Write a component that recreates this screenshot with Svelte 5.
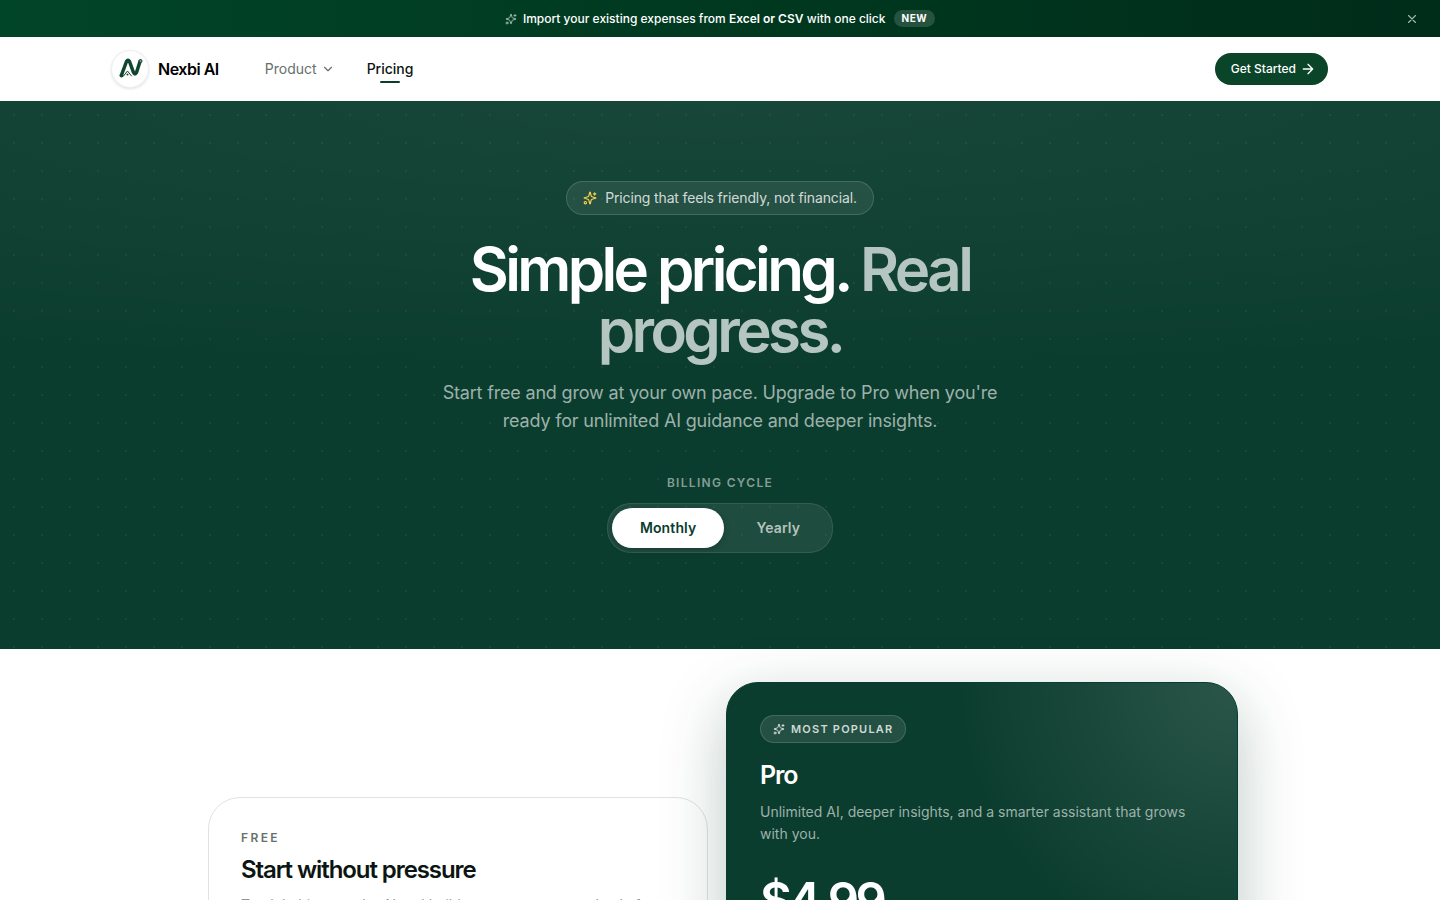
<script>
  const cycles = ["Monthly", "Yearly"];
  let cycle = $state("Monthly");
  let bannerOpen = $state(true);
</script>

{#snippet sparkles(size)}
  <svg class="icon" width={size} height={size} viewBox="0 0 24 24" aria-hidden="true">
    <path d="M9.937 15.5A2 2 0 0 0 8.5 14.063l-6.135-1.582a.5.5 0 0 1 0-.962L8.5 9.936A2 2 0 0 0 9.937 8.5l1.582-6.135a.5.5 0 0 1 .963 0L14.063 8.5A2 2 0 0 0 15.5 9.937l6.135 1.581a.5.5 0 0 1 0 .964L15.5 14.063a2 2 0 0 0-1.437 1.437l-1.582 6.135a.5.5 0 0 1-.963 0z" />
    <path d="M20 3v4M22 5h-4" />
    <circle cx="4" cy="20" r="2" />
  </svg>
{/snippet}

{#if bannerOpen}
  <div class="banner">
    {@render sparkles(12)}
    <span>Import your existing expenses from <b>Excel or CSV</b> with one click</span>
    <span class="new">NEW</span>
    <button class="close" aria-label="Dismiss" onclick={() => (bannerOpen = false)}>
      <svg class="icon" width="14" height="14" viewBox="0 0 24 24"><path d="M18 6 6 18M6 6l12 12" /></svg>
    </button>
  </div>
{/if}

<header>
  <div class="bar">
    <a class="brand" href="/">
      <span class="logo">
        <svg width="26" height="22" viewBox="0 0 26 22" aria-hidden="true">
          <path class="stroke" d="M4.500 17 9.500 3.500Q11 1 12.500 3.500L16.500 14.500Q18 17.500 19.500 14.500L23 3.500" />
          <path class="thin" d="M6.500 18 10.500 13 14.500 18" />
          <circle cx="10.500" cy="16.500" r="1" />
          <circle cx="4.500" cy="17.500" r="2" />
          <circle class="ring" cx="23.500" cy="3" r="1.500" />
        </svg>
      </span>
      Nexbi AI
    </a>
    <nav>
      <button class="menu">
        Product
        <svg class="icon" width="14" height="14" viewBox="0 0 24 24"><path d="m6 9 6 6 6-6" /></svg>
      </button>
      <a class="current" href="/pricing">Pricing</a>
    </nav>
    <a class="cta" href="/signup">
      Get Started
      <svg class="icon" width="16" height="16" viewBox="0 0 24 24"><path d="M5 12h14M12 5l7 7-7 7" /></svg>
    </a>
  </div>
</header>

<main>
  <section class="hero">
    <p class="pill"><i>{@render sparkles(14)}</i>Pricing that feels friendly, not financial.</p>
    <h1>Simple pricing. <span>Real progress.</span></h1>
    <p class="lead">
      Start free and grow at your own pace. Upgrade to Pro when you're ready for unlimited AI guidance and deeper insights.
    </p>
    <p class="label" id="cycle">Billing cycle</p>
    <div class="toggle" role="group" aria-labelledby="cycle">
      {#each cycles as name}
        <button class:active={cycle === name} aria-pressed={cycle === name} onclick={() => (cycle = name)}>{name}</button>
      {/each}
    </div>
  </section>

  <section class="plans">
    <article class="card free">
      <p class="tier">Free</p>
      <h2>Start without pressure</h2>
      <p class="desc">Track habits, use the AI and build awareness — completely free.</p>
    </article>
    <article class="card pro">
      <p class="popular">{@render sparkles(12)}Most popular</p>
      <h2>Pro</h2>
      <p class="desc">Unlimited AI, deeper insights, and a smarter assistant that grows with you.</p>
      <p class="price">$4.99</p>
    </article>
  </section>
</main>

<style>
  :global(body) {
    margin: 0;
    background: #fff;
    color: #0c1512;
    font-family: Inter, "Liberation Sans", sans-serif;
    font-size: 14px;
    line-height: 20px;
  }
  p, h1, h2 { margin: 0; }
  a { color: inherit; text-decoration: none; }
  button {
    border: 0;
    padding: 0;
    background: none;
    color: inherit;
    font: inherit;
    cursor: pointer;
  }
  .icon {
    flex: none;
    fill: none;
    stroke: currentColor;
    stroke-width: 2;
    stroke-linecap: round;
    stroke-linejoin: round;
  }

  .banner {
    position: relative;
    display: flex;
    align-items: center;
    justify-content: center;
    gap: 6px;
    height: 37px;
    background: linear-gradient(to right, #014529, #00391f 50%, #002c1a);
    color: #fff;
    font-size: 12px;
    font-weight: 500;
  }
  .banner > .icon { color: #9db8aa; }
  .banner b { font-weight: 600; }
  .new {
    margin-left: 2px;
    padding: 0 8px;
    border-radius: 9px;
    background: rgba(255, 255, 255, 0.15);
    font-size: 10px;
    line-height: 17px;
    font-weight: 700;
    letter-spacing: 0.05em;
  }
  .close {
    position: absolute;
    right: 21px;
    display: flex;
    color: #a3b5ac;
  }

  .bar {
    display: flex;
    align-items: center;
    max-width: 1216px;
    height: 64px;
    margin: 0 auto;
  }
  .brand {
    display: flex;
    align-items: center;
    gap: 10px;
    color: #000;
    font-size: 16px;
    font-weight: 600;
    letter-spacing: -0.03em;
  }
  .logo {
    display: grid;
    place-items: center;
    width: 36px;
    height: 36px;
    border-radius: 50%;
    box-shadow: 0 0 0 1px #f0f1f0, 0 1px 3px 1px rgba(0, 0, 0, 0.12);
  }
  .logo path { fill: none; stroke: #0f4630; stroke-linejoin: round; stroke-linecap: round; }
  .logo .stroke { stroke-width: 3.5; }
  .logo .thin { stroke-width: 1; }
  .logo circle { fill: #0f4630; }
  .logo .ring { fill: #7b9c8b; stroke: #0f4630; stroke-width: 1; }
  nav {
    display: flex;
    align-items: center;
    gap: 32px;
    margin-left: 46px;
  }
  .menu { display: flex; align-items: center; gap: 4px; color: #66706b; }
  .current { position: relative; font-weight: 500; }
  .current::after {
    content: "";
    position: absolute;
    left: 50%;
    bottom: -4px;
    width: 20px;
    height: 2px;
    margin-left: -10px;
    border-radius: 1px;
    background: #0b3d2e;
  }
  .cta {
    display: flex;
    align-items: center;
    gap: 4px;
    height: 32px;
    margin-left: auto;
    padding: 0 12px 0 16px;
    border-radius: 16px;
    background: #0a4429;
    color: #fff;
    font-size: 12px;
    font-weight: 500;
  }

  .hero {
    display: flex;
    flex-direction: column;
    align-items: center;
    padding: 80px 24px 96px;
    background:
      radial-gradient(circle, rgba(255, 255, 255, 0.05) 1px, transparent 1px) 0 0 / 28px 28px,
      radial-gradient(ellipse 120% 50% at 50% 0, rgba(255, 255, 255, 0.05), transparent),
      #0b3d2e;
    color: #fff;
    text-align: center;
  }
  .pill {
    display: flex;
    align-items: center;
    gap: 8px;
    height: 32px;
    padding: 0 16px;
    border: 1px solid rgba(255, 255, 255, 0.15);
    border-radius: 17px;
    background: rgba(255, 255, 255, 0.08);
    color: rgba(255, 255, 255, 0.8);
    letter-spacing: -0.01em;
  }
  .pill i { display: flex; color: #fcd34d; }
  h1 {
    max-width: 576px;
    margin-top: 24px;
    font-size: 60px;
    line-height: 61px;
    font-weight: 600;
    letter-spacing: -0.06em;
  }
  h1 span { color: #b5c5c0; }
  .lead {
    max-width: 576px;
    margin-top: 18px;
    color: #9db1ab;
    font-size: 18px;
    line-height: 28px;
    letter-spacing: -0.01em;
  }
  .label {
    margin-top: 40px;
    color: #839f95;
    font-size: 12px;
    line-height: 16px;
    font-weight: 600;
    letter-spacing: 0.11em;
    text-transform: uppercase;
  }
  .toggle {
    display: flex;
    gap: 4px;
    margin-top: 12px;
    padding: 4px;
    border: 1px solid rgba(255, 255, 255, 0.1);
    border-radius: 24px;
    background: rgba(255, 255, 255, 0.08);
  }
  .toggle button {
    height: 40px;
    padding: 0 28px;
    border-radius: 20px;
    color: #b4c3bd;
    font-weight: 600;
    letter-spacing: 0.01em;
  }
  .toggle .active {
    background: #fff;
    color: #0b3d2e;
    box-shadow: 0 2px 6px rgba(0, 0, 0, 0.2);
  }

  .plans {
    display: grid;
    grid-template-columns: 1fr 1fr;
    align-items: center;
    gap: 24px;
    max-width: 1024px;
    margin: 0 auto;
    padding: 33px 24px;
  }
  .card {
    box-sizing: border-box;
    padding: 32px;
    border: 1px solid #dfe3e1;
    border-radius: 32px;
  }
  .card h2 {
    font-size: 24px;
    line-height: 32px;
    font-weight: 600;
    letter-spacing: -0.045em;
  }
  .desc { margin-top: 8px; color: #8d9692; line-height: 22px; }
  .free { min-height: 410px; }
  .tier {
    margin-bottom: 8px;
    color: #66706b;
    font-size: 12px;
    line-height: 16px;
    font-weight: 600;
    letter-spacing: 0.2em;
    text-transform: uppercase;
  }
  .pro {
    min-height: 640px;
    margin: 0 -6px;
    padding: 32px 33px;
    border-color: #0b3d2e;
    background: radial-gradient(circle at 100% 0, rgba(255, 255, 255, 0.13), transparent 280px) #0b3d2e;
    box-shadow: 0 20px 64px rgba(11, 61, 46, 0.28);
    color: #fff;
  }
  .popular {
    display: flex;
    align-items: center;
    gap: 6px;
    width: max-content;
    height: 26px;
    margin-bottom: 16px;
    padding: 0 12px;
    border: 1px solid rgba(255, 255, 255, 0.15);
    border-radius: 14px;
    background: rgba(255, 255, 255, 0.1);
    color: #d0dad6;
    font-size: 11px;
    font-weight: 600;
    letter-spacing: 0.11em;
    text-transform: uppercase;
  }
  .pro h2 { font-size: 25px; }
  .pro .desc { margin-top: 10px; color: #9db1ab; }
  .price {
    margin-top: 32px;
    font-size: 49px;
    line-height: 48px;
    font-weight: 600;
    letter-spacing: -0.07em;
  }

  @media (max-width: 800px) {
    .bar { padding: 0 16px; }
    .plans { grid-template-columns: 1fr; }
    .pro { margin: 0; }
  }
</style>
